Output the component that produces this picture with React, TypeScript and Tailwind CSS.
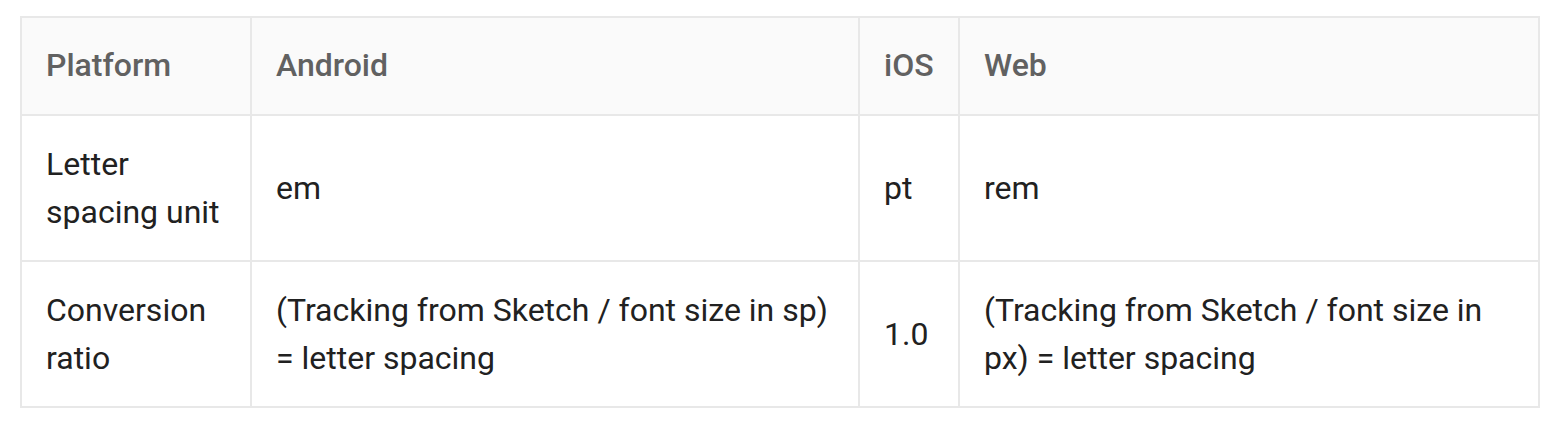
const headers = ["Platform", "Android", "iOS", "Web"];

const rows: string[][] = [
  ["Letter spacing unit", "em", "pt", "rem"],
  [
    "Conversion ratio",
    "(Tracking from Sketch / font size in sp) = letter spacing",
    "1.0",
    "(Tracking from Sketch / font size in px) = letter spacing",
  ],
];

export default function App() {
  return (
    <div className="min-h-[436px] bg-white px-5 pt-4 font-['Roboto',sans-serif]">
      <table className="w-[1518px] table-fixed border-collapse border-2 border-[#e8e8e8] text-[32px] leading-[48px]">
        <colgroup>
          <col className="w-[230px]" />
          <col className="w-[608px]" />
          <col className="w-[100px]" />
          <col className="w-[580px]" />
        </colgroup>
        <thead>
          <tr className="bg-[#fafafa]">
            {headers.map((h) => (
              <th
                key={h}
                className="border-2 border-[#e8e8e8] px-6 pt-[23px] pb-[25px] text-left font-medium text-[#616161]"
              >
                {h}
              </th>
            ))}
          </tr>
        </thead>
        <tbody>
          {rows.map((row, i) => (
            <tr key={i}>
              {row.map((cell, j) => (
                <td
                  key={j}
                  className="border-2 border-[#e8e8e8] p-6 align-middle text-[#212121]"
                >
                  {cell}
                </td>
              ))}
            </tr>
          ))}
        </tbody>
      </table>
    </div>
  );
}
